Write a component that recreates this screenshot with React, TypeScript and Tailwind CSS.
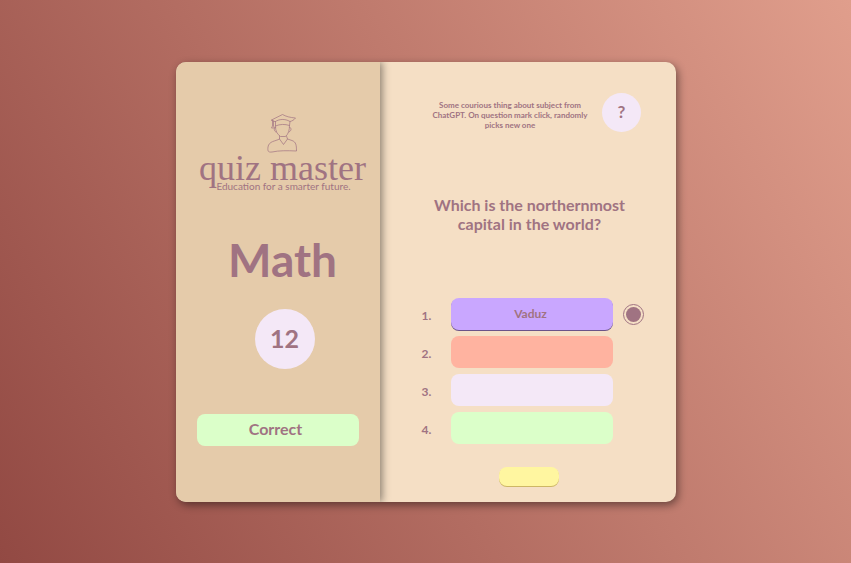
import { useState } from "react";

const answers = [
  { text: "Vaduz", color: "bg-[#c9a7ff]" },
  { text: "", color: "bg-[#ffb3a0]" },
  { text: "", color: "bg-[#f4e8f7]" },
  { text: "", color: "bg-[#dbffc9]" },
];

function GraduateIcon() {
  return (
    <svg viewBox="0 0 30 40" className="h-10 w-[30px]" fill="none" stroke="currentColor" strokeWidth="0.7" strokeLinejoin="round" strokeLinecap="round" aria-hidden="true">
      <path d="M4.500 7 L15.500 1.500 C19 3.500 23 4.500 28.500 5 C27 7 25 8 23 8.500 C18 5.500 12 6 8.500 8.500 Z" />
      <path d="M5.500 7.500 V13 L4.500 15 H7.500 L6.500 13 V8 M8.500 8.500 V13 C13 11 18 11 22.500 12.500 L23 8.500" />
      <path d="M8.500 13 C8.300 18 10 21 13.500 23.500 H18.500 C21.500 21 22.500 17 22.500 12.500" />
      <path d="M8.300 14.500 C6.500 15 7 18.500 9 19 M22.700 14.500 C25 14.500 24.500 18 22 19" />
      <path d="M12.500 23 V26 L16.500 31.500 L20.500 26 L19.500 23 M12.500 26 C8 28.500 2 28 1 34 C.5 38 1 39.500 5 39 C12 37.500 20 37.500 29.500 38 C29.500 32 29 29 25 27.500 L20.500 26" />
    </svg>
  );
}

export default function App() {
  const [selected, setSelected] = useState(0);
  return (
    <main className="flex min-h-screen items-center justify-center bg-[linear-gradient(60deg,#924943,#e09e8c)] font-['Lato',sans-serif] font-bold text-[#a07382]">
      <div className="flex min-h-[440px] w-full max-w-[500px] overflow-hidden rounded-[10px] bg-[#f5dfc5] shadow-[2px_3px_8px_rgba(0,0,0,0.45)]">
        <aside className="flex w-[204px] shrink-0 flex-col items-center bg-[#e5cbaa] pt-[51px] shadow-[2px_0_8px_rgba(0,0,0,0.45)]">
          <header className="flex flex-col items-center pl-[10px]">
            <GraduateIcon />
            <p className="font-['Liberation_Serif',serif] text-[36px] leading-[30px] font-normal whitespace-nowrap">quiz master</p>
            <p className="-mt-[2px] pl-[2px] text-[10px] leading-[10px] font-normal">Education for a smarter future.</p>
          </header>
          <h1 className="mt-[38px] pl-[10px] text-[46px] leading-[62px]">Math</h1>
          <div className="mt-[18px] ml-[14px] flex size-[60px] items-center justify-center rounded-full bg-[#f4e8f7] text-[25px]">12</div>
          <div className="mt-[45px] flex h-8 w-[162px] items-center justify-center rounded-lg bg-[#dbffc9] pr-1 pb-[2px] text-[16px]" role="status">Correct</div>
        </aside>
        <section className="flex min-w-0 flex-1 flex-col items-center pt-[31px] pl-1">
          <div className="flex items-center gap-3 pl-3">
            <p className="w-[160px] pt-[6px] text-center text-[8px] leading-[10px]">Some courious thing about subject from ChatGPT. On question mark click, randomly picks new one</p>
            <button type="button" aria-label="New fact" className="size-[39px] rounded-full bg-[#f4e8f7] text-[17px]">?</button>
          </div>
          <h2 className="mt-[63px] w-[210px] text-center text-[16px] leading-[19px]">Which is the northernmost capital in the world?</h2>
          <ol className="mt-[65px] flex flex-col gap-[6px] pl-[6px]">
            {answers.map((a, i) => (
              <li key={i} className="flex h-8 items-center">
                <label htmlFor={`answer-${i}`} className="w-[29px] pt-[4px] text-[12px] leading-4">{i + 1}.</label>
                <button
                  type="button"
                  id={`answer-${i}`}
                  onClick={() => setSelected(i)}
                  className={`h-8 w-[162px] rounded-lg pr-[2px] text-[12px] ${a.color} ${selected === i ? "shadow-[0_1px_0_#6b5488]" : ""}`}
                >
                  {a.text}
                </button>
                <span className="flex w-[31px] justify-end pt-[2px]">
                  {selected === i && (
                    <input
                      type="radio"
                      name="answer"
                      aria-label="Selected answer"
                      checked
                      readOnly
                      className="size-[21px] appearance-none rounded-full border border-[#a07382] bg-[#a07382] bg-clip-content p-[2px]"
                    />
                  )}
                </span>
              </li>
            ))}
          </ol>
          <button type="button" aria-label="Next question" className="mt-[23px] mr-[2px] h-[19px] w-[60px] rounded-lg bg-[#fff6a0] shadow-[0_1px_0_#cdb765]" />
        </section>
      </div>
    </main>
  );
}
